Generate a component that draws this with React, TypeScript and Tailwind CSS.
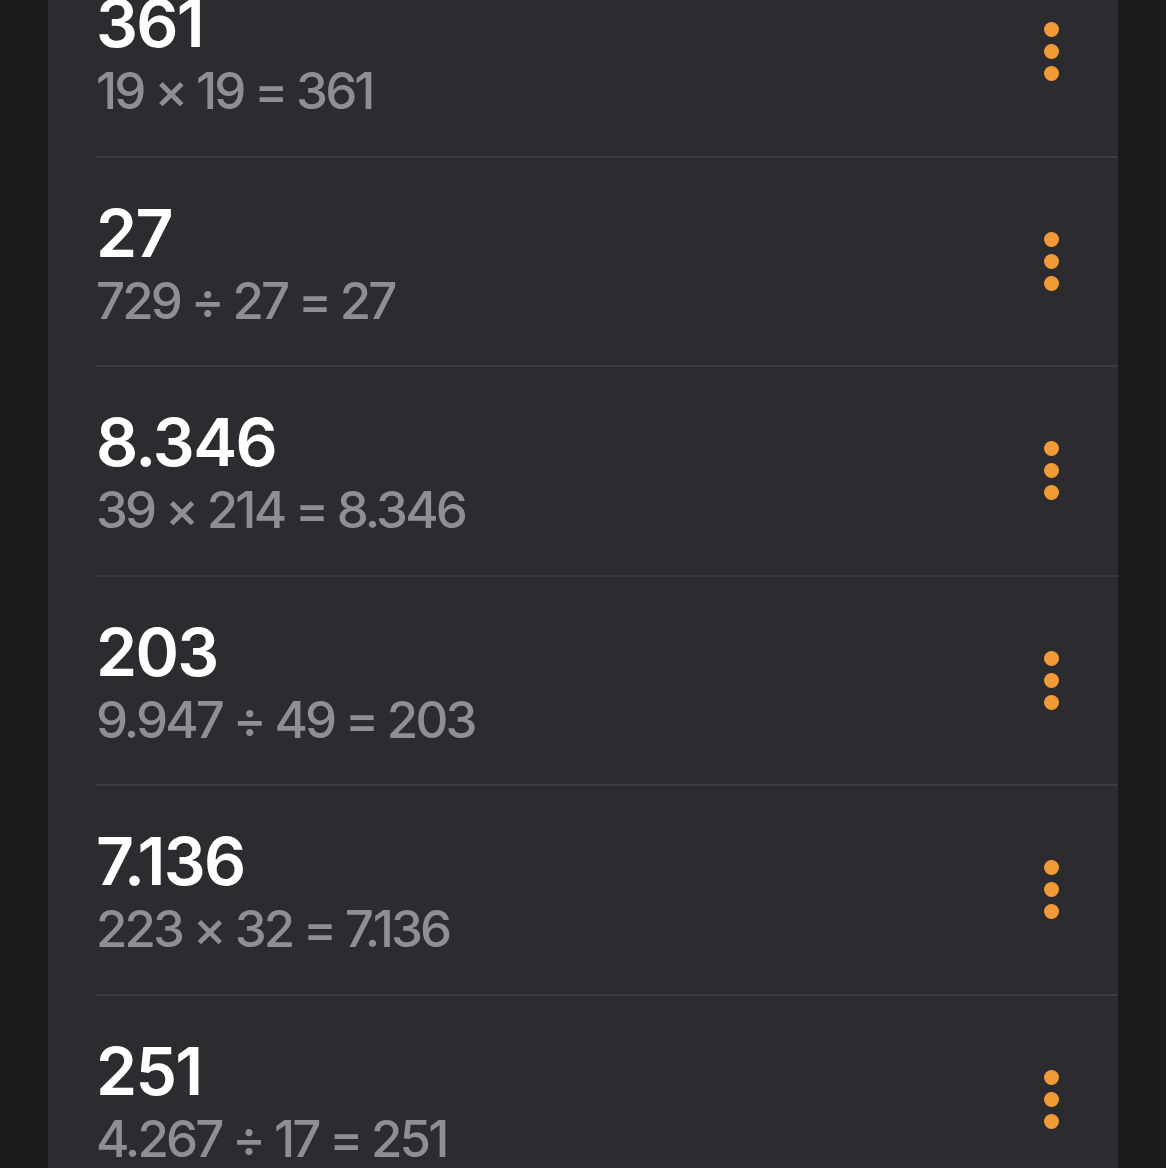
import React from "react";

const history = [
  { result: "361", expr: "19 × 19 = 361" },
  { result: "27", expr: "729 ÷ 27 = 27" },
  { result: "8.346", expr: "39 × 214 = 8.346" },
  { result: "203", expr: "9.947 ÷ 49 = 203" },
  { result: "7.136", expr: "223 × 32 = 7.136" },
  { result: "251", expr: "4.267 ÷ 17 = 251" },
];

function MoreDots() {
  return (
    <button className="flex flex-col items-center gap-[7px] px-2">
      <span className="w-[15px] h-[15px] rounded-full bg-[#f09b38]" />
      <span className="w-[15px] h-[15px] rounded-full bg-[#f09b38]" />
      <span className="w-[15px] h-[15px] rounded-full bg-[#f09b38]" />
    </button>
  );
}

function HistoryRow({ item }: { item: { result: string; expr: string } }) {
  return (
    <div className="flex flex-col h-[209.5px] shrink-0">
      <div className="flex flex-row items-center justify-between flex-1 pl-[48px] pr-[51px]">
        <div className="flex flex-col mt-[4px]">
          <span className="text-white text-[66px] leading-[66px] font-semibold tracking-[-1.7px]">
            {item.result}
          </span>
          <span className="text-[#8e8e93] text-[51px] leading-[52px] font-medium mt-[9px] tracking-[-2.9px]">
            {item.expr}
          </span>
        </div>
        <MoreDots />
      </div>
      <div className="ml-[48px] h-[2px] bg-[#3b3a3f]" />
    </div>
  );
}

export default function App() {
  return (
    <div
      className="w-full h-[1168px] bg-[#1a1a1a] overflow-hidden flex justify-center"
      style={{ fontFamily: "Inter, 'Noto Sans', sans-serif" }}
    >
      <div className="w-[1070px] bg-[#2c2c30] flex flex-col">
        {/* list is scrolled, first row is partly hidden */}
        <div className="flex flex-col mt-[-52px]">
          {history.map((item, i) => (
            <HistoryRow key={i} item={item} />
          ))}
        </div>
      </div>
    </div>
  );
}
